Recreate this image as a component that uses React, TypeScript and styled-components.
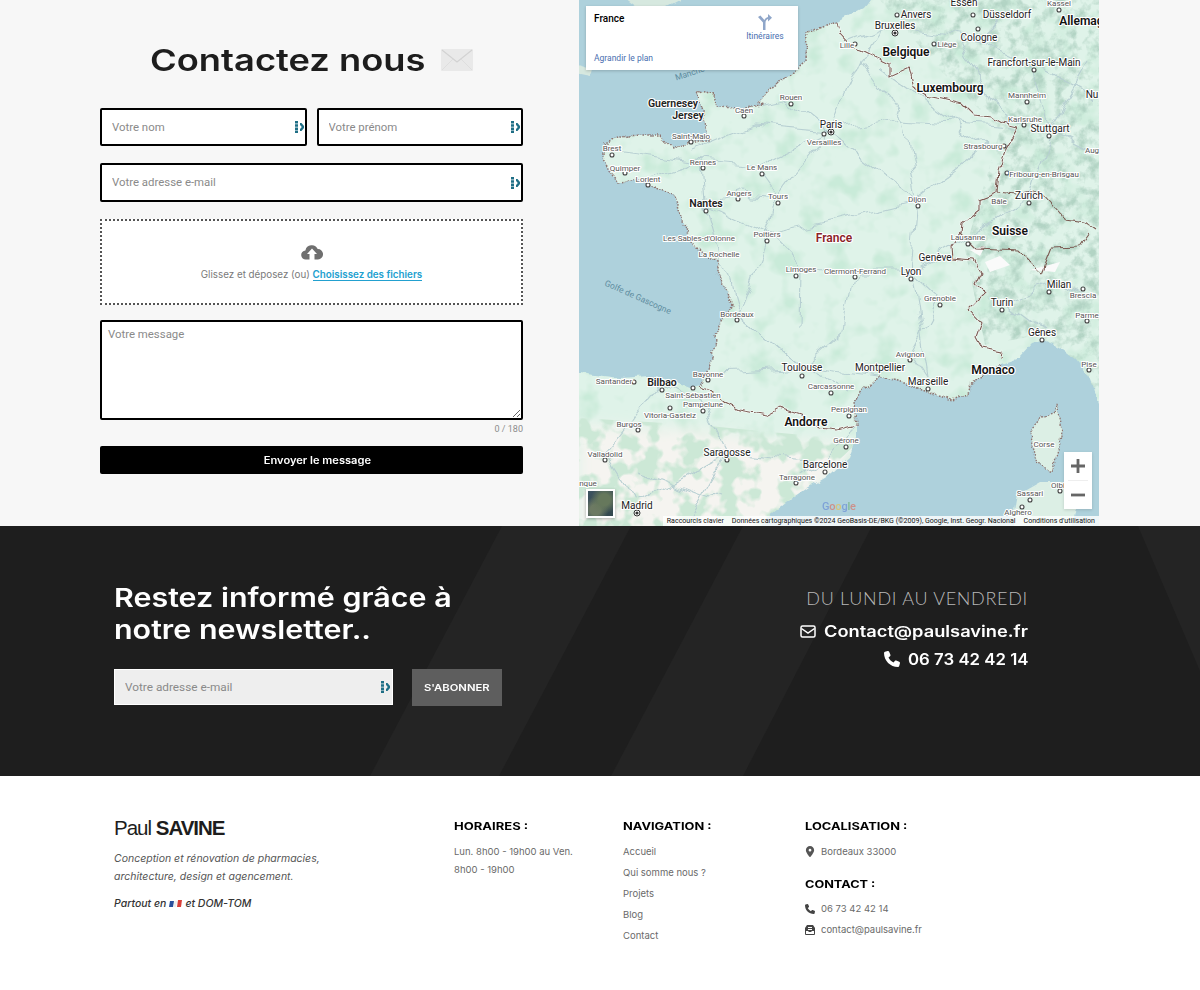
import { createGlobalStyle } from 'styled-components'
import styled from 'styled-components'

const GlobalStyle = createGlobalStyle`
  html, body { margin: 0; padding: 0; background: #fff; }
  * { box-sizing: border-box; }
  body { font-family: 'Inter', 'Liberation Sans', sans-serif; }
`

const WIDE = `'Inter', 'Liberation Sans', sans-serif`
const BODY = `'Inter', 'Liberation Sans', sans-serif`
const SOFT = `'Roboto', 'Liberation Sans', sans-serif`

// the site's display face is an extended grotesk, so stretch the text to its width
const Wide = styled.span<{ $sx: number; $w?: number }>`
  display: inline-block;
  white-space: nowrap;
  width: ${({ $w }) => ($w ? `${$w}px` : 'auto')};
  transform: scaleX(${({ $sx }) => $sx});
  transform-origin: left center;
`

const Hero = styled.section`
  display: flex;
  height: 526px;
  background: #f7f7f7;
  overflow: hidden;
`

const FormColumn = styled.div`
  width: 579px;
  padding: 0 56px 0 100px;
  display: flex;
  flex-direction: column;
`

const Title = styled.h1`
  margin: 41px 0 0;
  height: 38px;
  display: flex;
  justify-content: center;
  align-items: center;
  gap: 15px;
  font: 600 30px/38px ${WIDE};
  color: #1d1d1d;
`

const Form = styled.form`
  margin-top: 29px;
  display: flex;
  flex-direction: column;
`

const Row = styled.div`
  display: flex;
  gap: 10px;
  margin-bottom: 17px;
`

const Field = styled.div<{ $h?: number }>`
  position: relative;
  flex: 1;
  height: ${({ $h }) => $h ?? 38}px;
`

const TextInput = styled.input`
  width: 100%;
  height: 100%;
  border: 2px solid #000;
  border-radius: 2px;
  background: #fff;
  padding: 0 24px 1px 10px;
  font: 400 11.4px ${SOFT};
  outline: none;
  &::placeholder {
    color: #8a8a8a;
    opacity: 1;
  }
`

const Mark = styled.svg`
  position: absolute;
  right: 3px;
  top: 50%;
  transform: translateY(-50%);
`

const Upload = styled.div`
  height: 86px;
  border: 2px dotted #555;
  background: #fff;
  display: flex;
  flex-direction: column;
  align-items: center;
  padding-top: 23px;
  font: 400 9.8px ${BODY};
  color: #7a7a7a;
  margin-bottom: 15px;
  a {
    color: #22a0cf;
    font-weight: 600;
    border-bottom: 1px solid #22a0cf;
    text-decoration: none;
  }
  p {
    margin: 9px 0 0;
  }
`

const Message = styled.textarea`
  display: block;
  width: 100%;
  height: 100px;
  border: 2px solid #000;
  border-radius: 2px;
  background: #fff;
  padding: 4px 6px;
  font: 400 11.4px/16px ${SOFT};
  outline: none;
  resize: both;
  &::placeholder {
    color: #8a8a8a;
    opacity: 1;
  }
`

const Counter = styled.div`
  text-align: right;
  font: 400 9px/12px ${SOFT};
  color: #8c8c8c;
  margin: 3px 0 11px;
`

const SendButton = styled.button`
  height: 28px;
  width: 100%;
  border: 0;
  border-radius: 2px;
  background: #000;
  color: #fff;
  font: 600 10px ${WIDE};
  text-align: center;
`

const MapBox = styled.div`
  position: relative;
  width: 520px;
  height: 526px;
  overflow: hidden;
  svg.map {
    display: block;
  }
`

const InfoPanel = styled.div`
  position: absolute;
  left: 7px;
  top: 6px;
  width: 212px;
  height: 64px;
  background: #fff;
  box-shadow: 0 1px 3px rgba(0, 0, 0, 0.2);
  font: 400 8.5px ${SOFT};
  color: #4a6fb0;
  strong {
    position: absolute;
    left: 8px;
    top: 7px;
    font: 500 10px ${SOFT};
    color: #000;
  }
`

const PanelLink = styled.a`
  position: absolute;
  left: 8px;
  bottom: 7px;
`

const Directions = styled.div`
  position: absolute;
  right: 14px;
  top: 8px;
  width: 38px;
  display: flex;
  flex-direction: column;
  align-items: center;
  gap: 1px;
`

const ZoomControl = styled.div`
  position: absolute;
  left: 485px;
  top: 452px;
  width: 28px;
  height: 57px;
  background: #fff;
  display: flex;
  flex-direction: column;
  align-items: center;
  padding-top: 7px;
  gap: 7px;
  box-shadow: 0 1px 3px rgba(0, 0, 0, 0.15);
`

const ZoomDivider = styled.div`
  width: 20px;
  height: 1px;
  background: #eee;
`

const Thumbnail = styled.div`
  position: absolute;
  left: 7px;
  top: 489px;
  width: 29px;
  height: 29px;
  border: 2px solid #fff;
  box-shadow: 0 1px 3px rgba(0, 0, 0, 0.3);
  background:
    radial-gradient(circle at 65% 35%, #66785c 0 25%, transparent 60%),
    radial-gradient(circle at 30% 75%, #6d7a63 0 20%, transparent 50%),
    linear-gradient(135deg, #3c525f, #34484e);
`

const Attribution = styled.div`
  position: absolute;
  right: 0;
  bottom: 0;
  height: 10px;
  width: 436px;
  background: rgba(255, 255, 255, 0.8);
  display: flex;
  justify-content: flex-end;
  gap: 8px;
  padding-right: 4px;
  font: 400 7.05px/10px ${SOFT};
  color: #111;
  white-space: nowrap;
`

const GoogleMark = styled.div`
  position: absolute;
  left: 243px;
  top: 500px;
  font: 500 11px/14px ${SOFT};
  opacity: 0.75;
  letter-spacing: -0.2px;
`

const GoogleLetter = styled.span<{ $c: string }>`
  color: ${({ $c }) => $c};
`

const Newsletter = styled.section`
  position: relative;
  height: 250px;
  background: #1e1e1e;
  color: #fff;
  display: flex;
  justify-content: space-between;
  padding: 56px 172px 0 114px;
  overflow: hidden;
`

const Stripes = styled.svg`
  position: absolute;
  left: 0;
  top: 0;
`

const NewsLeft = styled.div`
  position: relative;
`

const NewsTitle = styled.h2`
  margin: 0;
  font: 600 26px/32px ${WIDE};
  span {
    display: block;
  }
`

const NewsForm = styled.div`
  display: flex;
  gap: 19px;
  margin-top: 23px;
`

const NewsField = styled.div`
  position: relative;
  width: 279px;
  height: 36px;
`

const NewsInput = styled.input`
  width: 100%;
  height: 100%;
  border: 1px solid #fff;
  background: #eee;
  padding: 0 24px 0 10px;
  font: 400 11.8px ${SOFT};
  outline: none;
  &::placeholder {
    color: #8a8a8a;
    opacity: 1;
  }
`

const SubscribeButton = styled.button`
  width: 90px;
  height: 37px;
  border: 0;
  background: #5e5e5e;
  color: #fff;
  font: 600 9px ${WIDE};
  padding: 0 0 0 12px;
  text-align: left;
`

const NewsRight = styled.div`
  position: relative;
  display: flex;
  flex-direction: column;
  align-items: flex-end;
  padding-top: 4px;
`

const Hours = styled.div`
  font: 300 18px/24px 'Lato', sans-serif;
  letter-spacing: 0.7px;
  color: #b9b9b9;
  white-space: nowrap;
  margin-bottom: 5px;
`

const ContactLine = styled.div`
  display: flex;
  align-items: center;
  gap: 8px;
  margin-top: 4px;
  height: 24px;
  font: 600 15.5px ${WIDE};
`

const Footer = styled.footer`
  display: flex;
  height: 214px;
  padding: 40px 0 0 114px;
  background: #fff;
`

const FooterCol = styled.div<{ $w: number }>`
  width: ${({ $w }) => $w}px;
  flex: none;
`

const Logo = styled.div`
  font: 400 20.5px/24px 'Liberation Sans', sans-serif;
  letter-spacing: -1px;
  color: #1d1d1d;
  b {
    font-weight: 700;
  }
`

const Tagline = styled.p`
  margin: 10px 0 0;
  font: italic 400 10.5px/18px ${BODY};
  color: #555;
`

const Everywhere = styled.p`
  margin: 9px 0 0;
  font: italic 500 10.5px/18px ${BODY};
  color: #333;
`

const Flag = styled.svg`
  vertical-align: -1px;
  margin: 0 3px;
`

const FooterHeading = styled.h3`
  margin: 0 0 3px;
  font: 700 10.5px/22px ${WIDE};
  color: #000;
`

const FooterText = styled.div<{ $lh?: number }>`
  font: 400 9.5px/${({ $lh }) => $lh ?? 21}px ${BODY};
  padding-top: ${({ $lh }) => ($lh ? 2 : 0)}px;
  color: #6a6a6a;
  white-space: nowrap;
`

const IconLine = styled.div`
  display: flex;
  align-items: center;
  gap: 6px;
  height: 21px;
  font: 400 9.5px ${BODY};
  color: #6a6a6a;
  svg {
    flex: none;
  }
`

const ContactHeading = styled(FooterHeading)`
  margin: 12px 0 2px;
`

const land = '#dff3e9'
const sea = '#aed1dc'

const atlantic =
  'M879 -12 863 8 837 22 822 27 807 32 806 60 790 75 765 92 758 102 763 105 745 107 736 108 718 107 715 95 695 91 700 105 706 125 709 142 690 142 672 149 660 135 640 135 620 137 603 145 603 157 610 170 618 182 640 180 660 190 675 195 678 210 685 225 690 240 705 255 717 262 717 272 725 285 733 305 718 325 715 345 708 372 700 385 690 388 670 380 650 376 620 378 570 372 570 -12Z'
const med =
  'M1110 405 1098 403 1089 377 1076 360 1059 347 1042 340 1032 343 1019 357 1002 363 986 375 972 383 967 395 952 400 936 395 912 387 899 382 879 377 872 383 862 390 854 403 856 423 856 437 849 457 832 473 809 487 786 503 769 516 755 536 1110 536Z'
const corsica =
  'M1057 403 1061 423 1062 437 1052 472 1037 463 1032 447 1031 430 1042 418 1055 413Z'
const sardinia = 'M1010 536 1017 495 1040 482 1065 482 1078 500 1070 536Z'
const uk = 'M620 -5 690 -5 665 8 640 10Z M570 62 592 68 590 76 570 72Z'

const channelCoast =
  'M837 22 822 27 807 32 806 60 790 75 765 92 758 102 763 105 745 107 736 108 718 107 715 95 695 91 700 105 706 125 709 142 690 142 672 149 660 135 640 135 620 137 603 145 603 157 610 170 618 182 640 180 660 190 675 195 678 210 685 225 690 240 705 255 717 262 717 272 725 285 733 305 718 325 715 345 708 372 700 385'
const riviera =
  'M856 425 854 403 862 390 872 383 879 377 899 382 912 387 936 395 952 400 967 395 972 383 986 375 1002 363'
const franceBorder =
  'M837 22 840 35 851 47 862 50 876 57 889 63 889 77 909 68 914 87 927 95 942 98 962 103 974 115 992 117 1002 123 1019 127 1006 150 999 170 997 193 979 200 979 210 962 223 961 233 951 247 952 258 974 260 981 273 976 283 986 293 969 310 981 323 976 337 982 348 1002 352 1001 360'
const spainBorder = 'M699 386 712 392 724 403 739 410 766 415 779 408 801 415 819 428 836 430 856 425'
const swissBorder = 'M997 193 1016 195 1040 190 1061 213 1065 220 1086 223 1096 230 M1089 233 1079 247 1052 248 1042 273 M1042 273 1019 250 976 248 961 233'

const roads = [
  'M690 150 750 125 830 132 905 120 1019 127',
  'M830 132 860 60 880 30',
  'M830 132 790 100 745 110',
  'M830 132 778 196 767 234 737 314 802 368 879 377',
  'M830 132 917 199 911 271 928 381',
  'M703 162 757 167 830 132',
  'M612 150 703 162 706 204 767 234 801 269 855 271 911 271',
  'M648 179 703 162',
  'M802 368 737 314',
  'M802 368 850 395',
  'M917 199 985 146',
  'M911 271 968 237 1029 196',
  'M911 271 940 298 910 354 928 381',
  'M1002 302 1059 284 1087 295',
  'M1002 302 1042 332',
  'M1029 196 1050 129 1034 63',
  'M1034 63 979 38 895 26 847 45',
  'M979 38 1007 15',
  'M1050 129 1092 150',
  'M708 374 802 368',
  'M662 383 702 404 727 453 825 464',
  'M629 424 662 383',
  'M629 424 605 454 637 505 727 453',
  'M825 464 797 477',
  'M825 464 846 440 856 423',
  'M757 167 778 196 739 193 706 204',
  'M1034 63 1091 95',
  'M855 271 845 330 802 368',
  'M860 60 905 120 917 199',
  'M880 70 985 146',
  'M767 234 830 220 917 199',
  'M801 269 800 330',
  'M706 204 737 314',
  'M640 470 720 500',
  'M727 453 690 520',
  'M1090 60 1050 129',
  'M960 40 990 100 1025 122',
]

type Kind = 'big' | 'mid' | 'small' | 'tiny' | 'red'
const labels: [string, number, number, Kind][] = [
  ['Belgique', 906, 56, 'big'], ['Luxembourg', 950, 92, 'big'], ['Suisse', 1010, 235, 'big'],
  ['Monaco', 993, 374, 'big'], ['Andorre', 806, 426, 'big'], ['Allemagne', 1088, 25, 'big'],
  ['France', 834, 242, 'red'], ['Guernesey', 673, 107, 'mid'], ['Jersey', 688, 119, 'mid'],
  ['Nantes', 706, 207, 'mid'], ['Paris', 831, 128, 'small'], ['Toulouse', 802, 371, 'small'],
  ['Bilbao', 662, 386, 'mid'], ['Marseille', 928, 385, 'small'], ['Montpellier', 880, 371, 'small'],
  ['Lyon', 911, 275, 'small'], ['Zurich', 1029, 199, 'small'], ['Stuttgart', 1050, 132, 'small'],
  ['Milan', 1059, 288, 'small'], ['Turin', 1002, 306, 'small'], ['Gênes', 1042, 336, 'small'],
  ['Genève', 935, 261, 'small'], ['Barcelone', 825, 468, 'small'], ['Saragosse', 727, 456, 'small'],
  ['Madrid', 637, 509, 'small'], ['Cologne', 979, 41, 'small'], ['Düsseldorf', 1007, 18, 'small'],
  ['Bruxelles', 895, 29, 'small'], ['Anvers', 916, 18, 'small'], ['Essen', 964, 6, 'small'],
  ['Francfort-sur-le-Main', 1034, 66, 'small'], ['Nu', 1092, 98, 'small'],
  ['Mannheim', 1027, 98, 'tiny'], ['Karlsruhe', 1025, 122, 'tiny'], ['Strasbourg', 983, 149, 'tiny'],
  ['Fribourg-en-Brisgau', 1044, 177, 'tiny'], ['Kassel', 1059, 6, 'tiny'], ['Liège', 947, 47, 'tiny'],
  ['Lille', 847, 48, 'tiny'], ['Rouen', 791, 100, 'tiny'], ['Caen', 744, 113, 'tiny'],
  ['Versailles', 824, 145, 'tiny'], ['Saint-Malo', 691, 139, 'tiny'], ['Brest', 612, 151, 'tiny'],
  ['Quimper', 625, 171, 'tiny'], ['Lorient', 648, 182, 'tiny'], ['Rennes', 703, 165, 'tiny'],
  ['Le Mans', 762, 170, 'tiny'], ['Angers', 739, 196, 'tiny'], ['Tours', 778, 199, 'tiny'],
  ['Dijon', 917, 202, 'tiny'], ['Poitiers', 767, 237, 'tiny'], ["Les Sables-d'Olonne", 699, 241, 'tiny'],
  ['La Rochelle', 719, 257, 'tiny'], ['Limoges', 801, 272, 'tiny'], ['Clermont-Ferrand', 855, 274, 'tiny'],
  ['Grenoble', 940, 301, 'tiny'], ['Avignon', 910, 357, 'tiny'], ['Bordeaux', 737, 317, 'tiny'],
  ['Bayonne', 708, 377, 'tiny'], ['Santander', 614, 384, 'tiny'], ['Saint-Sébastien', 693, 398, 'tiny'],
  ['Pampelune', 703, 407, 'tiny'], ['Vitoria-Gasteiz', 670, 418, 'tiny'], ['Burgos', 629, 427, 'tiny'],
  ['Carcassonne', 831, 389, 'tiny'], ['Perpignan', 849, 412, 'tiny'], ['Gérone', 846, 443, 'tiny'],
  ['Valladolid', 605, 457, 'tiny'], ['Tarragone', 797, 480, 'tiny'], ['Lausanne', 968, 240, 'tiny'],
  ['Bâle', 999, 204, 'tiny'], ['Brescia', 1083, 298, 'tiny'], ['Parme', 1087, 318, 'tiny'],
  ['Pise', 1089, 367, 'tiny'], ['Corse', 1044, 447, 'tiny'], ['Sassari', 1030, 496, 'tiny'],
  ['Alghero', 1018, 515, 'tiny'], ['Olbi', 1058, 488, 'tiny'], ['Aug', 1092, 153, 'tiny'],
  ['nque', 588, 486, 'tiny'],
]

const dots: [number, number][] = [
  [897, 15], [964, 3], [973, 15], [978, 29], [934, 44], [1034, 70], [1027, 102], [1024, 125],
  [1049, 136], [1004, 146], [1007, 173], [1029, 203], [968, 244], [918, 206], [855, 44], [791, 104],
  [744, 116], [824, 134], [691, 142], [612, 155], [625, 173], [648, 185], [703, 168], [706, 211],
  [762, 174], [738, 199], [778, 203], [767, 241], [796, 276], [855, 277], [911, 279], [940, 305],
  [1002, 310], [1049, 292], [1083, 289], [1087, 321], [1089, 370], [1042, 340], [910, 360], [928, 389],
  [737, 320], [802, 376], [708, 380], [693, 388], [662, 390], [634, 382], [670, 408], [703, 411],
  [638, 430], [605, 460], [727, 460], [825, 472], [796, 483], [846, 447], [849, 416], [831, 393],
  [1030, 500], [1022, 507], [1060, 491], [1059, 10],
]

const majorDots: [number, number][] = [[831, 132], [895, 33], [637, 513]]

const haloed = { paintOrder: 'stroke', stroke: '#fff', strokeWidth: 2.2, strokeLinejoin: 'round' } as const

const labelStyle: Record<Kind, { size: number; weight: number; fill: string }> = {
  big: { size: 12, weight: 600, fill: '#111' },
  mid: { size: 10.5, weight: 600, fill: '#222' },
  small: { size: 10, weight: 400, fill: '#222' },
  tiny: { size: 8, weight: 400, fill: '#555' },
  red: { size: 12, weight: 600, fill: '#8a2327' },
}

function FranceMap() {
  return (
    <svg className="map" width={520} height={526} viewBox="579 0 520 526">
      <defs>
        <filter id="soft" x="-20%" y="-20%" width="140%" height="140%">
          <feGaussianBlur stdDeviation="7" />
        </filter>
        <filter id="mottle" x="0" y="0" width="100%" height="100%" colorInterpolationFilters="sRGB">
          <feTurbulence type="fractalNoise" baseFrequency="0.04" numOctaves="3" seed="4" />
          <feColorMatrix values="0 0 0 0 0.79  0 0 0 0 0.92  0 0 0 0 0.85  3.500 0 0 0 -1.700" />
        </filter>
        <filter id="hills" x="0" y="0" width="100%" height="100%" colorInterpolationFilters="sRGB">
          <feTurbulence type="fractalNoise" baseFrequency="0.09" numOctaves="4" seed="9" />
          <feColorMatrix values="0 0 0 0 0.70  0 0 0 0 0.83  0 0 0 0 0.77  3 0 0 0 -1.300" />
        </filter>
        <filter id="spain" x="0" y="0" width="100%" height="100%" colorInterpolationFilters="sRGB">
          <feTurbulence type="fractalNoise" baseFrequency="0.05" numOctaves="3" seed="12" />
          <feColorMatrix values="0 0 0 0 0.80  0 0 0 0 0.91  0 0 0 0 0.84  7 0 0 0 -3.200" />
        </filter>
        <filter id="wiggle" filterUnits="userSpaceOnUse" x={560} y={-20} width={560} height={570} colorInterpolationFilters="sRGB">
          <feTurbulence type="fractalNoise" baseFrequency="0.09" numOctaves="2" seed="3" result="n" />
          <feDisplacementMap in="SourceGraphic" in2="n" scale="7" xChannelSelector="R" yChannelSelector="G" />
        </filter>
        <filter id="roadBend" filterUnits="userSpaceOnUse" x={560} y={-20} width={560} height={570} colorInterpolationFilters="sRGB">
          <feTurbulence type="fractalNoise" baseFrequency="0.035" numOctaves="2" seed="7" result="n" />
          <feDisplacementMap in="SourceGraphic" in2="n" scale="22" xChannelSelector="R" yChannelSelector="G" />
        </filter>
        <clipPath id="spainClip">
          <path d="M579 418 700 425 770 432 860 440 770 526 579 526Z" />
        </clipPath>
        <clipPath id="alpsClip">
          <path d="M880 0H1099V395L1040 335 985 345 965 250 1000 130 940 70Z" />
        </clipPath>
      </defs>
      <rect x={579} y={0} width={520} height={526} fill={land} />
      <rect x={579} y={0} width={520} height={526} filter="url(#mottle)" />
      <path d="M579 425 700 430 770 440 860 445 770 536 579 536Z" fill="#f5f4f0" filter="url(#soft)" />
      <g clipPath="url(#spainClip)">
        <rect x={579} y={400} width={300} height={126} filter="url(#spain)" />
      </g>
      <g clipPath="url(#alpsClip)">
        <rect x={880} y={0} width={219} height={400} filter="url(#hills)" />
      </g>
      <path d="M985 262 1000 256 1010 265 990 272Z M1030 270 1060 262 1055 272Z M970 250 985 246 980 256Z" fill="#fafafa" />
      <g fill="none" stroke="#b7cfd2" strokeWidth={1.1} filter="url(#roadBend)">
        {roads.map((d) => (
          <path key={d} d={d} />
        ))}
      </g>
      <g filter="url(#wiggle)">
        <path d={atlantic} fill={sea} />
        <path d={med} fill={sea} />
        <path d={corsica} fill="#dcefe5" stroke="#8d7470" strokeWidth={1.3} strokeDasharray="1.6 1.4" />
        <path d={sardinia} fill="#dcefe5" />
        <path d={uk} fill="#d6e8df" />
        <path d={channelCoast} fill="none" stroke="#8f7672" strokeWidth={1.5} strokeDasharray="1.6 1.3" />
        <path d={riviera} fill="none" stroke="#8f7672" strokeWidth={1.5} strokeDasharray="1.6 1.3" />
        <g fill="none" stroke="#fff" strokeOpacity={0.7} strokeWidth={2.4}>
          <path d={franceBorder} />
          <path d={spainBorder} />
        </g>
        <g fill="none" stroke="#7b5a52" strokeWidth={1.1}>
          <path d={franceBorder} />
          <path d={spainBorder} />
          <path d={swissBorder} />
        </g>
      </g>
      <text x={638} y={300} transform="rotate(24 638 297)" textAnchor="middle" fontFamily={SOFT} fontSize={8.5} fill="#5f8da0">
        Golfe de Gascogne
      </text>
      <text x={690} y={76} transform="rotate(-18 690 74)" textAnchor="middle" fontFamily={SOFT} fontSize={8.5} fill="#5f8da0">
        Manche
      </text>
      <g fill="#fff" stroke="#444" strokeWidth={1.1}>
        {dots.map(([x, y]) => (
          <circle key={`${x}-${y}`} cx={x} cy={y} r={2} />
        ))}
      </g>
      {majorDots.map(([x, y]) => (
        <g key={`${x}-${y}`}>
          <circle cx={x} cy={y} r={3} fill="#fff" stroke="#333" />
          <circle cx={x} cy={y} r={1.6} fill="#333" />
        </g>
      ))}
      {labels.map(([name, x, y, kind]) => (
        <text
          key={name}
          x={x}
          y={y}
          textAnchor="middle"
          fontFamily={SOFT}
          fontSize={labelStyle[kind].size}
          fontWeight={labelStyle[kind].weight}
          fill={labelStyle[kind].fill}
          style={haloed}
        >
          {name}
        </text>
      ))}
    </svg>
  )
}

function FieldMark() {
  return (
    <Mark width={9} height={12} viewBox="0 0 9 12" fill="#1f6f86">
      <path d="M0 0h3v2.500H0zM0 3.200h3v2.500H0zM0 6.400h3v2.500H0zM0 9.600h3V12H0zM5 2h1.500L9 5v2L6.500 10H5V8l1.500-1.500v-1L5 4z" />
    </Mark>
  )
}

const phonePath =
  'M164.900 24.600c-7.700-18.600-28-28.500-47.400-23.200l-88 24C12.100 30.200 0 46 0 64c0 247.400 200.600 448 448 448 18 0 33.800-12.100 38.600-29.500l24-88c5.300-19.400-4.600-39.700-23.200-47.400l-96-40c-16.300-6.800-35.200-2.100-46.300 11.600L304.700 368C234.300 334.700 177.300 277.700 144 207.300l49.300-40.300c13.700-11.200 18.400-30 11.600-46.300l-40-96z'

export default function App() {
  return (
    <>
      <GlobalStyle />
      <Hero>
        <FormColumn>
          <Title>
            <Wide $sx={1.21} $w={276}>
              Contactez nous
            </Wide>
            <svg width={32} height={24} viewBox="0 0 32 24">
              <rect width={32} height={22} y={1} rx={1} fill="#e9e9e9" />
              <path d="M1 2 16 14 31 2" fill="none" stroke="#d2d2d2" strokeWidth={1.2} />
              <path d="M1 22 12 11M31 22 20 11" fill="none" stroke="#dadada" strokeWidth={0.8} />
            </svg>
          </Title>
          <Form>
            <Row>
              <Field>
                <TextInput placeholder="Votre nom" />
                <FieldMark />
              </Field>
              <Field>
                <TextInput placeholder="Votre prénom" />
                <FieldMark />
              </Field>
            </Row>
            <Row>
              <Field $h={39}>
                <TextInput placeholder="Votre adresse e-mail" />
                <FieldMark />
              </Field>
            </Row>
            <Upload>
              <svg width={22} height={16} viewBox="0 0 22 16" fill="#6f6f6f">
                <path d="M5 15.500a4.500 4.500 0 0 1-.6-9 6.500 6.500 0 0 1 12.300-1.400A5.200 5.200 0 0 1 17 15.500h-3.500V10H16L11 4.500 6 10h2.500v5.500z" />
              </svg>
              <p>
                Glissez et déposez (ou) <a href="#">Choisissez des fichiers</a>
              </p>
            </Upload>
            <Message placeholder="Votre message" />
            <Counter>0 / 180</Counter>
            <SendButton type="button">
              <Wide $sx={1.11} $w={107}>
                Envoyer le message
              </Wide>
            </SendButton>
          </Form>
        </FormColumn>
        <MapBox>
          <FranceMap />
          <InfoPanel>
            <strong>France</strong>
            <Directions>
              <svg width={14} height={16} viewBox="0 0 14 16" fill="#8fa6c9">
                <path d="M5 16V8.500L0 3l2.400-1.600L6.400 6c.8-1.600 2-2.500 3.600-3V0L14 3.800 10 7.500V5c-1.700.6-2.500 2-2.500 4v7z" />
              </svg>
              <span>Itinéraires</span>
            </Directions>
            <PanelLink>Agrandir le plan</PanelLink>
          </InfoPanel>
          <GoogleMark>
            <GoogleLetter $c="#6f93d6">G</GoogleLetter>
            <GoogleLetter $c="#d77b70">o</GoogleLetter>
            <GoogleLetter $c="#e2c25e">o</GoogleLetter>
            <GoogleLetter $c="#6f93d6">g</GoogleLetter>
            <GoogleLetter $c="#71b57f">l</GoogleLetter>
            <GoogleLetter $c="#d77b70">e</GoogleLetter>
          </GoogleMark>
          <Thumbnail />
          <ZoomControl>
            <svg width={14} height={14} viewBox="0 0 14 14" fill="#666">
              <path d="M5.600 0h2.800v5.600H14v2.800H8.400V14H5.600V8.400H0V5.600h5.600z" />
            </svg>
            <ZoomDivider />
            <svg width={14} height={14} viewBox="0 0 14 14" fill="#666">
              <path d="M0 5.600h14v2.800H0z" />
            </svg>
          </ZoomControl>
          <Attribution>
            <span>Raccourcis clavier</span>
            <span>Données cartographiques ©2024 GeoBasis-DE/BKG (©2009), Google, Inst. Geogr. Nacional</span>
            <span>Conditions d'utilisation</span>
          </Attribution>
        </MapBox>
      </Hero>
      <Newsletter>
        <Stripes width={1200} height={250} viewBox="0 0 1200 250" fill="#242424">
          <path d="M502 0H631L499 250H370Z" />
          <path d="M743 0H872L743 250H611Z" />
          <path d="M1138 0H1200V145Z" />
        </Stripes>
        <NewsLeft>
          <NewsTitle>
            <Wide $sx={1.17}>Restez informé grâce à</Wide>
            <Wide $sx={1.17}>notre newsletter..</Wide>
          </NewsTitle>
          <NewsForm>
            <NewsField>
              <NewsInput placeholder="Votre adresse e-mail" />
              <FieldMark />
            </NewsField>
            <SubscribeButton type="button">
              <Wide $sx={1.25}>S'ABONNER</Wide>
            </SubscribeButton>
          </NewsForm>
        </NewsLeft>
        <NewsRight>
          <Hours>DU LUNDI AU VENDREDI</Hours>
          <ContactLine>
            <svg width={16} height={13} viewBox="0 0 16 13" fill="none" stroke="#fff" strokeWidth={1.5}>
              <rect x={1} y={1} width={14} height={11} rx={1.5} />
              <path d="M1.500 3.500 8 8l6.500-4.500" />
            </svg>
            <Wide $sx={1.178} $w={204}>
              Contact@paulsavine.fr
            </Wide>
          </ContactLine>
          <ContactLine>
            <svg width={16} height={16} viewBox="0 0 512 512" fill="#fff">
              <path d={phonePath} />
            </svg>
            <Wide $sx={1.084} $w={120}>
              06 73 42 42 14
            </Wide>
          </ContactLine>
        </NewsRight>
      </Newsletter>
      <Footer>
        <FooterCol $w={340}>
          <Logo>
            Paul <b>SAVINE</b>
          </Logo>
          <Tagline>
            Conception et rénovation de pharmacies,
            <br />
            architecture, design et agencement.
          </Tagline>
          <Everywhere>
            Partout en
            <Flag width={13} height={8} viewBox="0 0 13 8">
              <path d="M1 1h4L4 7H0z" fill="#2a4f9c" />
              <path d="M5.500 1H8L7 7H4.500z" fill="#eee" />
              <path d="M9 0h4l-1 7H8z" fill="#d9403a" />
            </Flag>
            et DOM-TOM
          </Everywhere>
        </FooterCol>
        <FooterCol $w={169}>
          <FooterHeading>
            <Wide $sx={1.24}>HORAIRES :</Wide>
          </FooterHeading>
          <FooterText $lh={18}>
            Lun. 8h00 - 19h00 au Ven.
            <br />
            8h00 - 19h00
          </FooterText>
        </FooterCol>
        <FooterCol $w={182}>
          <FooterHeading>
            <Wide $sx={1.225}>NAVIGATION :</Wide>
          </FooterHeading>
          <FooterText>Accueil</FooterText>
          <FooterText>Qui somme nous ?</FooterText>
          <FooterText>Projets</FooterText>
          <FooterText>Blog</FooterText>
          <FooterText>Contact</FooterText>
        </FooterCol>
        <FooterCol $w={200}>
          <FooterHeading>
            <Wide $sx={1.225}>LOCALISATION :</Wide>
          </FooterHeading>
          <IconLine>
            <svg width={10} height={11} viewBox="0 0 384 512" fill="#555">
              <path d="M215.700 499.200C267 435 384 279.400 384 192 384 86 298 0 192 0S0 86 0 192c0 87.400 117 243 168.300 307.200 12.300 15.300 35.100 15.300 47.400 0zM192 128a64 64 0 1 1 0 128 64 64 0 1 1 0-128z" />
            </svg>
            Bordeaux 33000
          </IconLine>
          <ContactHeading>
            <Wide $sx={1.21}>CONTACT :</Wide>
          </ContactHeading>
          <IconLine>
            <svg width={10} height={10} viewBox="0 0 512 512" fill="#444">
              <path d={phonePath} />
            </svg>
            06 73 42 42 14
          </IconLine>
          <IconLine>
            <svg width={10} height={10} viewBox="0 0 10 10" fill="#444">
              <path d="M2 0h6l2 3v6a1 1 0 0 1-1 1H1a1 1 0 0 1-1-1V3zM3 2v1h4V2zM3 4v1h4V4zM1 6v3h8V6H7L6 7H4L3 6z" fillRule="evenodd" />
            </svg>
            contact@paulsavine.fr
          </IconLine>
        </FooterCol>
      </Footer>
    </>
  )
}
